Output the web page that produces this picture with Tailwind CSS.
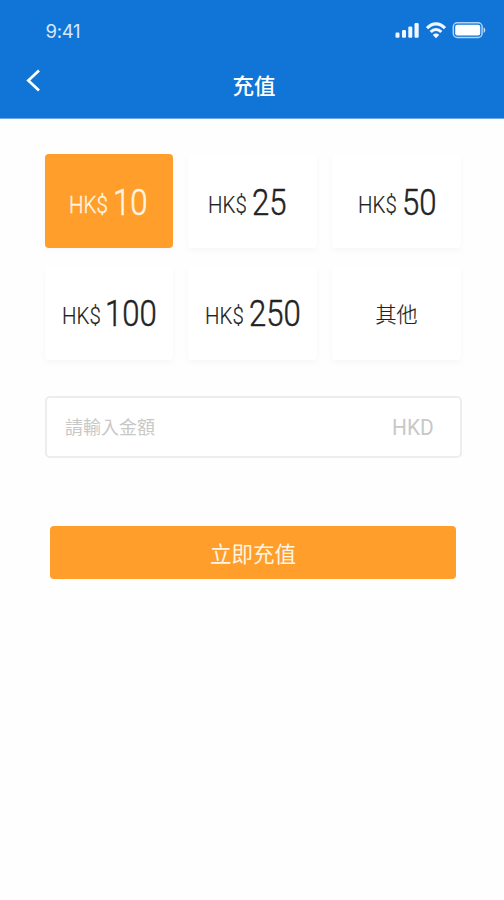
<!DOCTYPE html>
<html lang="zh-Hant">
<head>
<meta charset="utf-8">
<title>充值</title>
<script src="https://cdn.jsdelivr.net/npm/@tailwindcss/browser@4"></script>
</head>
<body class="bg-white">
<main class="w-[504px] h-[900px] overflow-hidden bg-[#fefefe] font-['Roboto','Noto_Sans_CJK_TC',sans-serif]">
  <header class="h-[119px] bg-[#1075d7] border-b border-[#6ea8e6] text-white">
    <div class="h-[60px] pl-[45.5px] pr-[18px] flex items-center justify-between">
      <span class="font-['Inter','Liberation_Sans',sans-serif] text-[18.5px] leading-6 tracking-[-0.3px] text-[#d5e7fa] pt-[1px]">9:41</span>
      <div class="flex items-center gap-[6px]">
        <svg width="25" height="18" viewBox="0 0 25 18" fill="#f0f6ff"><rect x="0.5" y="11.5" width="4" height="5.3" rx="1.2"/><rect x="7" y="9" width="4" height="7.8" rx="1.2"/><rect x="13.3" y="5.5" width="4" height="11.3" rx="1.2"/><rect x="19.5" y="2" width="4.2" height="14.8" rx="1.2"/></svg>
        <svg width="20" height="18" viewBox="0 0 20 18" fill="none" stroke="#f0f6ff" stroke-width="3.1"><path d="M1 7.2C6 1.4 14 1.4 19 7.2"/><path d="M4.7 11c3-3.300 7.600-3.300 10.600 0"/><path d="M10 17.200l-3.200-3.300c1.700-1.900 4.700-1.900 6.400 0z" fill="#f0f6ff" stroke="none"/></svg>
        <svg width="34" height="18" viewBox="0 0 34 18"><rect x="1.300" y="1.800" width="28.800" height="14.600" rx="4" fill="none" stroke="#b5d3f4" stroke-width="1.500"/><rect x="3.200" y="3.800" width="25" height="10.600" rx="2" fill="#fff"/><path d="M31.600 6.300c2.200 1 2.200 4.700 0 5.600z" fill="#c5dcf6"/></svg>
      </div>
    </div>
    <div class="h-[58px] grid grid-cols-[60px_1fr_60px]">
      <svg class="ml-[25px] mt-[7px]" width="18" height="26" viewBox="0 0 18 26" fill="none" stroke="#fff" stroke-width="2.700"><path d="M14 3.500L3.300 13.500L14 23.500"/></svg>
      <h1 class="text-center text-[21.500px] leading-[54px] font-medium pl-[4px]">充值</h1>
    </div>
  </header>

  <section class="pt-[35px] pl-[45px] pr-[43px]">
    <div class="grid grid-cols-[128px_129px_129px] grid-rows-[94px_94px] gap-x-[15px] gap-y-[18px] text-[#222]">
      <button class="flex items-start pl-[24px] pt-[25px] rounded-[4px] bg-[#ff9e2a] text-[#fff5e4] text-left shadow-[0_3px_7px_rgba(0,0,0,0.02)]">
        <span class="w-[44px] pt-[4px] text-[23px] leading-[46px] font-light"><span class="inline-block origin-left scale-x-[0.89] [-webkit-text-stroke:0.35px]">HK$</span></span>
        <span class="text-[37px] leading-[48px] font-light"><span class="inline-block origin-left scale-x-[0.84] [-webkit-text-stroke:0.6px]">10</span></span>
      </button>
      <button class="flex items-start pl-[20px] pt-[25px] rounded-[4px] bg-white text-left shadow-[0_3px_7px_rgba(0,0,0,0.03)]">
        <span class="w-[44px] pt-[4px] text-[23px] leading-[46px] font-light"><span class="inline-block origin-left scale-x-[0.89] [-webkit-text-stroke:0.2px]">HK$</span></span>
        <span class="text-[37px] leading-[48px] font-light"><span class="inline-block origin-left scale-x-[0.84] [-webkit-text-stroke:0.5px]">25</span></span>
      </button>
      <button class="flex items-start pl-[26px] pt-[25px] rounded-[4px] bg-white text-left shadow-[0_3px_7px_rgba(0,0,0,0.03)]">
        <span class="w-[44px] pt-[4px] text-[23px] leading-[46px] font-light"><span class="inline-block origin-left scale-x-[0.89] [-webkit-text-stroke:0.2px]">HK$</span></span>
        <span class="text-[37px] leading-[48px] font-light"><span class="inline-block origin-left scale-x-[0.84] [-webkit-text-stroke:0.5px]">50</span></span>
      </button>
      <button class="flex items-start pl-[17px] pt-[25px] rounded-[4px] bg-white text-left shadow-[0_3px_7px_rgba(0,0,0,0.03)]">
        <span class="w-[43px] pt-[3px] text-[23px] leading-[46px] font-light"><span class="inline-block origin-left scale-x-[0.89] [-webkit-text-stroke:0.2px]">HK$</span></span>
        <span class="text-[37px] leading-[46px] font-light"><span class="inline-block origin-left scale-x-[0.84] [-webkit-text-stroke:0.5px]">100</span></span>
      </button>
      <button class="flex items-start pl-[17px] pt-[25px] rounded-[4px] bg-white text-left shadow-[0_3px_7px_rgba(0,0,0,0.03)]">
        <span class="w-[44px] pt-[3px] text-[23px] leading-[46px] font-light"><span class="inline-block origin-left scale-x-[0.89] [-webkit-text-stroke:0.2px]">HK$</span></span>
        <span class="text-[37px] leading-[46px] font-light"><span class="inline-block origin-left scale-x-[0.84] [-webkit-text-stroke:0.5px]">250</span></span>
      </button>
      <button class="pt-[5px] rounded-[4px] bg-white text-[21px] font-light [-webkit-text-stroke:0.2px] shadow-[0_3px_7px_rgba(0,0,0,0.03)]">其他</button>
    </div>

    <div class="mt-[36px] w-[417px] h-[62px] pl-[18px] pr-[26px] flex items-center justify-between rounded-[5px] border-2 border-[#ededed] bg-white text-[#c8c8c8]">
      <span class="text-[18px]">請輸入金額</span>
      <span class="w-[42px] pt-px text-[22px]"><span class="inline-block origin-left scale-x-[0.95]">HKD</span></span>
    </div>

    <button class="block mt-[68px] ml-[5px] w-[406px] h-[53px] pt-px rounded-[4px] bg-[#ff9e2a] text-[#fff5e4] text-[21.500px] leading-[55px]">立即充值</button>
  </section>
</main>
</body>
</html>
